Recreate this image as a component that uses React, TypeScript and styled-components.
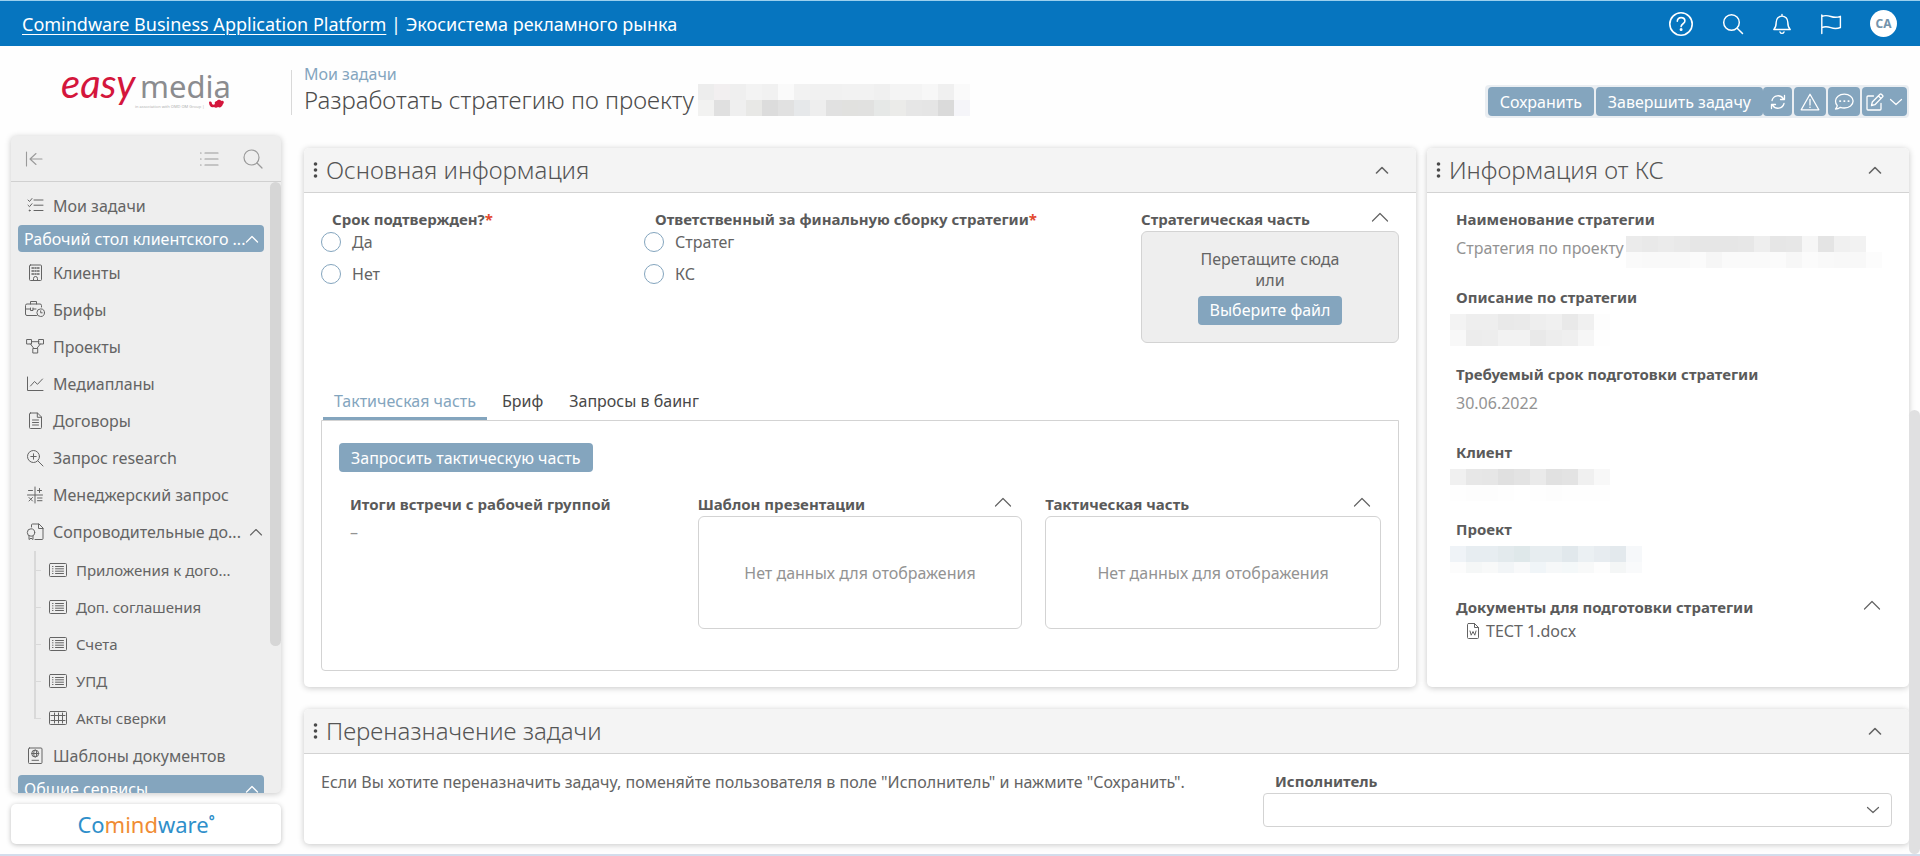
import React, { useId, useState } from "react";
import type { ReactNode } from "react";
import styled, { createGlobalStyle, css } from "styled-components";

const color = {
  brand: "#0675bf",
  accent: "#84a5be",
  text: "#646464",
  label: "#5a5a5a",
  muted: "#939393",
  line: "#d3d3d3",
  panelHead: "#f4f4f4",
  side: "#eeeeee",
};

const Global = createGlobalStyle`
  *, *::before, *::after { box-sizing: border-box; }
  body {
    margin: 0;
    background: #fefefe;
    color: ${color.text};
    font: 400 16px/22px "Noto Sans", "Open Sans", sans-serif;
  }
  button, input, select { font: inherit; color: inherit; }
  button { padding: 0; border: 0; background: none; cursor: pointer; }
  h1, h2, p, ul { margin: 0; padding: 0; }
  ul { list-style: none; }
  a { color: inherit; text-decoration: none; }
  svg { display: block; flex: none; }
`;

/* ---------- icons ---------- */

type IconProps = { w?: number; h?: number; sw?: number; children: ReactNode };

const Icon = ({ w = 20, h = 20, sw = 1, children }: IconProps) => (
  <svg
    width={w}
    height={h}
    viewBox={`0 0 ${w} ${h}`}
    fill="none"
    stroke="currentColor"
    strokeWidth={sw}
    strokeLinecap="round"
    strokeLinejoin="round"
    aria-hidden="true"
  >
    {children}
  </svg>
);

const ChevronUp = ({ wide = false, sw = 1.3 }: { wide?: boolean; sw?: number }) =>
  wide ? (
    <Icon w={18} h={10} sw={sw}><path d="M1.500 9 9 1.500 16.500 9" /></Icon>
  ) : (
    <Icon w={14} h={8} sw={sw}><path d="M1.500 7 7 1.500 12.500 7" /></Icon>
  );

const ChevronDown = () => (
  <Icon w={14} h={8} sw={1.2}><path d="M1.500 1.500 7 6.500l5.500-5" /></Icon>
);

const icons = {
  help: (
    <Icon w={26} h={26} sw={1.6}>
      <circle cx="13" cy="13" r="11.200" />
      <path d="M9.300 10.200c0-2.200 1.600-3.600 3.800-3.600s3.800 1.400 3.800 3.400c0 2.800-3.800 2.700-3.800 5.600" />
      <circle cx="13.100" cy="18.600" r=".7" fill="currentColor" />
    </Icon>
  ),
  searchTop: (
    <Icon w={22} h={22} sw={1.5}><circle cx="9.500" cy="9.500" r="7.800" /><path d="m15.200 15.200 5.300 5.300" /></Icon>
  ),
  bell: (
    <Icon w={20} h={22} sw={1.4}>
      <path d="M10 1.500v1.600M1.800 16.500c1.700-1.600 2.400-3 2.400-7.200C4.200 5.700 6.800 3.100 10 3.100s5.800 2.600 5.800 6.200c0 4.200.7 5.600 2.400 7.200z" />
      <path d="M8 19c.4 1 1.100 1.400 2 1.400s1.600-.4 2-1.400" />
    </Icon>
  ),
  flag: (
    <Icon w={22} h={22} sw={1.4}>
      <path d="M1.800 20.500V2M1.800 3.500c3.300-1.600 5.500-1.200 9 0s6.200 1.200 9.600-.2v11.200c-3.400 1.400-6.100 1.400-9.600.2s-5.700-1.600-9 0" />
    </Icon>
  ),
  collapse: (
    <Icon w={18} h={16} sw={1.1}><path d="M1.500 1v14M17 8H5M11 2.500 5 8l6 5.500" /></Icon>
  ),
  list: (
    <Icon w={20} h={16} sw={1.2}><path d="M6 2h13M6 8h13M6 14h13M1.500 2h.6M1.500 8h.6M1.500 14h.6" /></Icon>
  ),
  search: (
    <Icon w={20} h={20} sw={1.2}><circle cx="8.500" cy="8.500" r="7.500" /><path d="m14 14 5 5" /></Icon>
  ),
  tasks: (
    <Icon>
      <path d="M9 4h9M9 9.200h9M9 14.500h9M3 4l1.500 1.500L7 2.500M3 9.200l1.500 1.500L7 7.700" />
      <circle cx="4.600" cy="14.500" r=".5" fill="currentColor" />
    </Icon>
  ),
  building: (
    <Icon>
      <rect x="4.500" y="2" width="12" height="15.500" rx="1" />
      <path d="M7 5h1.500M10 5h1M12.500 5H14M7 8h1.500M10 8h1M12.500 8H14M7 11h1.500M10 11h1M12.500 11H14" strokeWidth="1.500" />
      <path d="M8.500 17.500v-2a2 2 0 0 1 4 0v2" />
    </Icon>
  ),
  briefcase: (
    <Icon>
      <path d="M11.500 15.500H2A1.500 1.500 0 0 1 .5 14V5.500A1.500 1.500 0 0 1 2 4h13a1.500 1.500 0 0 1 1.500 1.500V7M5.500 4V1.500h6V4M.5 9h5M8 9h3M5.500 8v2.500H8V8" />
      <circle cx="15.700" cy="12.700" r="3.800" />
      <path d="M15.700 10.800v2h1.500" />
    </Icon>
  ),
  nodes: (
    <Icon>
      <rect x="2" y="2.500" width="4.500" height="4.500" />
      <rect x="14" y="2.500" width="4.500" height="4.500" />
      <rect x="8.200" y="11.500" width="4.500" height="4.500" />
      <path d="M6.500 4.700H14M5.500 7l3.400 4.500M15.300 7l-3.500 4.500" />
    </Icon>
  ),
  chart: <Icon><path d="M2.500 3v13.500h15.500M5.500 12l4-4.500 3 2.800L17.500 5" /></Icon>,
  doc: (
    <Icon>
      <path d="M5.500 2h7l4 4v10.500a1 1 0 0 1-1 1h-10a1 1 0 0 1-1-1V3a1 1 0 0 1 1-1zM12.300 2v4.300h4.200M7.500 9h6M7.500 11.500h6M7.500 14h6" />
    </Icon>
  ),
  zoomIn: (
    <Icon><circle cx="8.500" cy="8.500" r="6" /><path d="m13 13 5 5M8.500 5.800v5.400M5.800 8.500h5.400" /></Icon>
  ),
  calc: (
    <Icon>
      <path d="M10 2v16M2.500 10h15M3.500 5.500h4M12.500 5.500h4M14.500 3.500v4M4 12.500l3.500 3.500M7.500 12.500 4 16M12.500 13h4.500M12.500 15.700h4.500" />
    </Icon>
  ),
  certificate: (
    <Icon>
      <path d="M6.500 5V3a1 1 0 0 1 1-1h6.500l4 4v10.500a1 1 0 0 1-1 1H10M13.500 2v4.500H18" />
      <circle cx="6" cy="10.500" r="3.700" />
      <path d="M4 13.700V17.500l2-1.300 2 1.300v-3.800" />
    </Icon>
  ),
  template: (
    <Icon>
      <rect x="3.500" y="2" width="13.500" height="15.500" rx="1" />
      <circle cx="10.200" cy="7.500" r="3.500" />
      <ellipse cx="10.200" cy="7.500" rx="1.500" ry="3.500" />
      <path d="M6.700 7.500h7M7 14.300h6.500" />
    </Icon>
  ),
  form: (
    <Icon w={18} h={14}>
      <rect x=".5" y=".5" width="17" height="13" rx="1" />
      <path d="M6.500 3.500h8M6.500 5.800h8M6.500 8.200h8M6.500 10.500h8M3.500 3.500h.5M3.500 5.800h.5M3.500 8.200h.5M3.500 10.500h.5" />
    </Icon>
  ),
  grid: (
    <Icon w={18} h={14}>
      <rect x=".5" y=".5" width="17" height="13" rx="1" />
      <path d="M2 4.500h14M2 9.500h14M5.500 2v10M9.500 2v10M13.500 2v10" />
    </Icon>
  ),
  refresh: (
    <Icon w={16} h={16} sw={1.3}>
      <path d="M2 6.500A6.200 6.200 0 0 1 13.300 4.700M14 9.500A6.200 6.200 0 0 1 2.700 11.300M14.500 1.500v4h-4M1.500 14.500v-4h4" />
    </Icon>
  ),
  warning: (
    <Icon w={20} h={18} sw={1.3}>
      <path d="M10 1.200 18.800 16.800H1.200zM10 6.500v5.500M10 14.100v.3" />
    </Icon>
  ),
  chat: (
    <Icon w={20} h={18} sw={1.3}>
      <path d="M10.300 1.200c5 0 8.800 3 8.800 6.900s-3.800 6.900-8.800 6.900c-1.400 0-2.800-.2-3.900-.7-1.300 1-3 1.700-4.900 1.700 1-.9 1.600-2 1.800-3.300C2.100 11.500 1.500 9.900 1.500 8.100c0-3.900 3.800-6.900 8.800-6.900z" />
      <path d="M6 8.100h.3M10.200 8.100h.3M14.400 8.100h.3" strokeWidth="1.900" />
    </Icon>
  ),
  edit: (
    <Icon w={18} h={18} sw={1.3}>
      <path d="M7.500 3H2A1 1 0 0 0 1 4v12a1 1 0 0 0 1 1h12a1 1 0 0 0 1-1v-5.500M5.500 12.500l.8-3.500L14 1.300a1 1 0 0 1 1.400 0l1.200 1.200a1 1 0 0 1 0 1.400L8.900 11.700zM12.500 3l2.500 2.500" />
    </Icon>
  ),
  word: (
    <Icon w={12} h={16}>
      <path d="M1.500.5h6l4 4v10a1 1 0 0 1-1 1h-9a1 1 0 0 1-1-1v-13a1 1 0 0 1 1-1zM7.500.5v4h4M3 8l1.200 4.200L6 8.500l1.800 3.700L9 8" />
    </Icon>
  ),
};

/* ---------- shell ---------- */

const Shell = styled.div`
  position: relative;
  display: flex;
  flex-direction: column;
  min-height: 100vh;
  border-bottom: 2px solid #d3ddec;
`;

const TopBar = styled.header`
  display: flex;
  align-items: center;
  justify-content: space-between;
  height: 46px;
  padding: 0 23px 0 22px;
  border-top: 1px solid #9bd0ee;
  background: ${color.brand};
  color: #fff;
  font-size: 18px;
`;

const PlatformLink = styled.a`
  text-decoration: underline;
  text-decoration-thickness: 1px;
  text-underline-offset: 3px;
`;

const TopActions = styled.div`
  display: flex;
  align-items: center;
  gap: 28px;
`;

const Avatar = styled.button`
  width: 27px;
  height: 27px;
  border-radius: 50%;
  background: #fff;
  color: #7393ab;
  font-size: 12px;
  font-weight: 700;
`;

const Body = styled.div`
  flex: 1;
  display: grid;
  grid-template-columns: 291px minmax(0, 1fr);
`;

/* ---------- sidebar ---------- */

const SideColumn = styled.div`
  display: flex;
  flex-direction: column;
  padding: 0 10px 10px 11px;
`;

const LogoArea = styled.div`
  display: flex;
  align-items: center;
  justify-content: center;
  height: 90px;
`;

const SidePanel = styled.nav`
  position: relative;
  flex: 1 1 0;
  display: flex;
  flex-direction: column;
  min-height: 0;
  overflow: hidden;
  border-radius: 5px;
  background: ${color.side};
  box-shadow: 0 1px 6px rgba(0, 0, 0, 0.22);
`;

const SideHead = styled.div`
  flex: none;
  display: flex;
  align-items: center;
  gap: 24px;
  height: 46px;
  padding: 0 18px 0 14px;
  border-bottom: 1px solid #d0d0d0;
  color: #9a9a9a;

  button:first-child { margin-right: auto; }
`;

const SideList = styled.ul`
  padding: 5px 17px 0 7px;
`;

const SideLink = styled.a`
  display: flex;
  align-items: center;
  gap: 8px;
  height: 37px;
  padding: 0 5px 0 7px;
  white-space: nowrap;

  svg:last-child:not(:first-child) { margin-left: auto; }
`;

const GroupButton = styled.button`
  display: flex;
  align-items: center;
  justify-content: space-between;
  width: 100%;
  height: 27px;
  margin: 1px 0 2px;
  padding: 0 5px 0 6px;
  border-radius: 4px;
  background: ${color.accent};
  color: #fff;
  white-space: nowrap;
`;

const SubItem = styled.li`
  position: relative;

  &::before, &::after {
    content: "";
    position: absolute;
    left: 16px;
    background: #d9d9d9;
  }
  &::before { top: 0; width: 2px; height: 100%; }
  &:last-child::before { height: 50%; }
  &::after { top: 50%; width: 7px; height: 1px; }
`;

const SubList = styled.ul`
  padding: 1px 0;
`;

const SubLink = styled.a`
  display: flex;
  align-items: center;
  gap: 9px;
  height: 37px;
  padding-left: 31px;
  font-size: 15px;
  white-space: nowrap;
`;

const SideThumb = styled.span`
  position: absolute;
  top: 46px;
  right: 0;
  width: 11px;
  height: calc((100% - 46px) * 0.76);
  border-radius: 6px;
  background: #d6d6d6;
`;

const VendorCard = styled.a`
  display: flex;
  align-items: center;
  justify-content: center;
  height: 40px;
  margin-top: 11px;
  border-radius: 5px;
  background: #fff;
  box-shadow: 0 1px 5px rgba(0, 0, 0, 0.25);
  color: #2f8fca;
  font-size: 22px;

  span { color: #f08c34; }
  sup { align-self: flex-start; margin-top: 10px; font-size: 14px; line-height: 14px; font-weight: 700; }
`;

type NavEntry = { label: string; icon: keyof typeof icons };

const clientLinks: NavEntry[] = [
  { label: "Клиенты", icon: "building" },
  { label: "Брифы", icon: "briefcase" },
  { label: "Проекты", icon: "nodes" },
  { label: "Медиапланы", icon: "chart" },
  { label: "Договоры", icon: "doc" },
  { label: "Запрос research", icon: "zoomIn" },
  { label: "Менеджерский запрос", icon: "calc" },
];

const docLinks: NavEntry[] = [
  { label: "Приложения к дого...", icon: "form" },
  { label: "Доп. соглашения", icon: "form" },
  { label: "Счета", icon: "form" },
  { label: "УПД", icon: "form" },
  { label: "Акты сверки", icon: "grid" },
];

const NavItem = ({ label, icon, open }: NavEntry & { open?: boolean }) => (
  <SideLink href="#">
    {icons[icon]}
    {label}
    {open && <ChevronUp sw={1.1} />}
  </SideLink>
);

const Logo = () => (
  <svg width="176" height="72" viewBox="0 0 176 72" role="img" aria-label="easymedia">
    <text x="3" y="43" fontFamily="Lato, sans-serif" fontStyle="italic" fontWeight="400" fontSize="40" fill="#d4163c">easy</text>
    <text x="82" y="43" fontFamily="Noto Sans, sans-serif" fontWeight="400" fontSize="31" fill="#8b8c8f">media</text>
    <text x="77" y="53" fontFamily="Noto Sans, sans-serif" fontSize="4" fill="#b0b0b0">in association with OMD OM Group |</text>
    <path d="M151 47c2-1 3 0 3 2 1 1 2 1 3 0-1-2 1-3 2-3 1-2 4-1 4 0 2-1 4 1 2 3-1 3-3 4-5 3-1 1-3 1-4 0-3 1-5-1-5-5z" fill="#d4163c" />
  </svg>
);

const Sidebar = () => (
  <SideColumn>
    <LogoArea><Logo /></LogoArea>
    <SidePanel aria-label="Навигация">
      <SideHead>
        <button type="button" aria-label="Свернуть">{icons.collapse}</button>
        <button type="button" aria-label="Список">{icons.list}</button>
        <button type="button" aria-label="Поиск">{icons.search}</button>
      </SideHead>
      <SideList>
        <li><NavItem label="Мои задачи" icon="tasks" /></li>
        <li>
          <GroupButton type="button">Рабочий стол клиентского ...<ChevronUp /></GroupButton>
          <ul>
            {clientLinks.map((l) => <li key={l.label}><NavItem {...l} /></li>)}
            <li>
              <NavItem label="Сопроводительные до..." icon="certificate" open />
              <SubList>
                {docLinks.map((l) => (
                  <SubItem key={l.label}>
                    <SubLink href="#">{icons[l.icon]}{l.label}</SubLink>
                  </SubItem>
                ))}
              </SubList>
            </li>
            <li><NavItem label="Шаблоны документов" icon="template" /></li>
          </ul>
        </li>
        <li><GroupButton type="button">Общие сервисы<ChevronUp /></GroupButton></li>
      </SideList>
      <SideThumb />
    </SidePanel>
    <VendorCard href="#">Co<span>mind</span>ware<sup>°</sup></VendorCard>
  </SideColumn>
);

/* ---------- main area ---------- */

const Main = styled.main`
  padding: 0 11px 10px 0;
`;

const PageHead = styled.div`
  display: flex;
  height: 102px;
  padding-top: 18px;
`;

const Divider = styled.span`
  width: 1px;
  height: 45px;
  margin: 6px 12px 0 0;
  background: #d9d9d9;
`;

const Breadcrumb = styled.a`
  display: block;
  line-height: 21px;
  color: ${color.accent};
`;

const PageTitle = styled.h1`
  display: flex;
  align-items: center;
  gap: 4px;
  height: 30px;
  font-size: 24px;
  font-weight: 300;
  line-height: 30px;
  color: #4c4c4c;
`;

const Toolbar = styled.div`
  display: flex;
  gap: 2px;
  height: 33px;
  margin: 21px 0 0 auto;
  padding: 2px 2px 2px 3px;
  border-radius: 4px;
  background: #eaeef2;
`;

const actionStyle = css`
  display: inline-flex;
  align-items: center;
  justify-content: center;
  gap: 5px;
  border-radius: 4px;
  background: ${color.accent};
  color: #fff;
  white-space: nowrap;
`;

const ActionButton = styled.button`
  ${actionStyle}
  height: 29px;
  padding: 0 12px;
`;

const IconAction = styled.button<{ $width?: number; $joined?: boolean }>`
  ${actionStyle}
  width: ${(p) => p.$width ?? 32}px;
  margin-left: ${(p) => (p.$joined ? "-2px" : 0)};
`;

const Panels = styled.div`
  display: grid;
  grid-template-columns: minmax(0, 1112fr) minmax(0, 482fr);
  gap: 22px 11px;
  padding-left: 13px;
`;

const PanelBox = styled.section<{ $wide?: boolean }>`
  display: flex;
  flex-direction: column;
  grid-column: ${(p) => (p.$wide ? "1 / -1" : "auto")};
  border-radius: 5px;
  background: #fff;
  box-shadow: 0 1px 6px rgba(0, 0, 0, 0.22);
`;

const PanelHead = styled.header`
  display: flex;
  align-items: center;
  height: 45px;
  padding: 0 27px 0 9px;
  border-bottom: 1px solid ${color.line};
  border-radius: 5px 5px 0 0;
  background: ${color.panelHead};
`;

const PanelTitle = styled.h2`
  margin: 0 auto 0 8px;
  font-size: 24px;
  font-weight: 300;
  line-height: 30px;
  color: #555;
`;

const Grip = () => (
  <svg width="5" height="16" viewBox="0 0 5 16" fill="#4a4a4a" aria-hidden="true">
    <circle cx="2.500" cy="2" r="1.800" /><circle cx="2.500" cy="8" r="1.800" /><circle cx="2.500" cy="14" r="1.800" />
  </svg>
);

const Panel = ({ title, wide, children }: { title: string; wide?: boolean; children: ReactNode }) => (
  <PanelBox $wide={wide}>
    <PanelHead>
      <Grip />
      <PanelTitle>{title}</PanelTitle>
      <button type="button" aria-label={`Свернуть: ${title}`}><ChevronUp sw={1.6} /></button>
    </PanelHead>
    {children}
  </PanelBox>
);

/* Redacted value drawn as rows of shaded cells. */
const MosaicGrid = styled.span<{ $cols: number; $pull?: boolean; $tail?: number }>`
  display: inline-grid;
  grid-template-columns: repeat(${(p) => p.$cols}, 16px);
  grid-template-rows: 16px ${(p) => p.$tail ?? 16}px;
  margin-left: ${(p) => (p.$pull ? "-6px" : 0)};
`;

const Cell = styled.i<{ $fill: string }>`
  background: #${(p) => p.$fill};
`;

const Mosaic = ({ rows, pull, tail }: { rows: [string, string]; pull?: boolean; tail?: number }) => {
  const cells = rows.map((r) => r.split(" ").map((c) => (c.length === 2 ? c + c + c : c)));
  return (
    <MosaicGrid $cols={cells[0].length} $pull={pull} $tail={tail} aria-hidden="true">
      {cells.flat().map((c, i) => <Cell key={i} $fill={c} />)}
    </MosaicGrid>
  );
};

const labelStyle = css`
  display: block;
  height: 22px;
  margin: 0;
  color: ${color.label};
  font-size: 15px;
  font-weight: 700;
  line-height: 20px;
  white-space: nowrap;
`;

const Label = styled.span<{ $inset?: number }>`
  ${labelStyle}
  padding-left: ${(p) => p.$inset ?? 0}px;
`;

const SelectLabel = styled.label`
  ${labelStyle}
  padding-left: 12px;
`;

const Required = styled.span`
  color: #e2492f;
`;

const MainBody = styled.div`
  padding: 16px 17px;
`;

const TopFields = styled.div`
  display: grid;
  grid-template-columns: minmax(0, 323fr) minmax(0, 497fr) minmax(0, 258fr);
  min-height: 176px;
`;

const RadioSet = styled.fieldset`
  margin: 0;
  padding: 0;
  border: 0;
  min-width: 0;
`;

const Legend = styled.legend`
  ${labelStyle}
  padding: 0 0 0 11px;
`;

const RadioRow = styled.label`
  display: flex;
  align-items: center;
  gap: 11px;
  height: 20px;
  margin: 1px 0 12px;
`;

const Radio = styled.input`
  appearance: none;
  width: 20px;
  height: 20px;
  margin: 0;
  border: 1px solid ${color.accent};
  border-radius: 50%;
  background: #fff;

  &:checked { border-width: 6px; }
`;

const RadioField = ({ title, options }: { title: string; options: string[] }) => {
  const name = useId();
  return (
    <RadioSet>
      <Legend>{title}<Required>*</Required></Legend>
      {options.map((o) => (
        <RadioRow key={o}><Radio type="radio" name={name} />{o}</RadioRow>
      ))}
    </RadioSet>
  );
};

const FieldHead = styled.div`
  display: flex;
  justify-content: space-between;
  align-items: flex-start;
  padding-right: 10px;

  button { margin-top: 3px; }
`;

const DropZone = styled.div`
  display: flex;
  flex-direction: column;
  align-items: center;
  height: 112px;
  padding-top: 17px;
  border: 1px solid ${color.line};
  border-radius: 6px;
  background: ${color.side};
  line-height: 21px;
  text-align: center;

  button { margin-top: 5px; }
`;

const TabList = styled.div`
  display: flex;
  gap: 4px;
  padding-left: 2px;
`;

const Tab = styled.button`
  height: 35px;
  padding: 0 11px;
  border-bottom: 3px solid transparent;
  color: #484848;

  &[aria-selected="true"] {
    border-color: ${color.accent};
    color: ${color.accent};
  }
`;

const TabPanel = styled.div`
  padding: 22px 17px 41px;
  border: 1px solid ${color.line};
  border-radius: 0 0 4px 4px;
`;

const ResultGrid = styled.div`
  display: grid;
  grid-template-columns: minmax(0, 336fr) minmax(0, 325fr) minmax(0, 336fr);
  gap: 23px;
  margin-top: 22px;
`;

const Dash = styled.p`
  padding: 5px 0 0 11px;
  color: ${color.muted};
`;

const EmptyBox = styled.div`
  display: flex;
  align-items: center;
  justify-content: center;
  height: 113px;
  border: 1px solid ${color.line};
  border-radius: 6px;
  color: ${color.muted};
`;

const Collapser = ({ title }: { title: string }) => (
  <FieldHead>
    <Label>{title}</Label>
    <button type="button" aria-label={`Свернуть: ${title}`}><ChevronUp wide sw={1.2} /></button>
  </FieldHead>
);

const InfoBody = styled.div`
  flex: 1;
  display: grid;
  grid-template-rows: repeat(6, 1fr);
  padding: 16px 18px 13px 29px;
`;

const InfoValue = styled.div`
  display: flex;
  align-items: flex-start;
  height: 32px;
  margin-top: 5px;
  color: ${color.muted};
  line-height: 24px;
  white-space: nowrap;
  gap: 2px;
`;

const FileLink = styled.a`
  display: flex;
  align-items: center;
  gap: 7px;
  padding: 1px 0 0 11px;
`;

const AssignBody = styled.div`
  display: grid;
  grid-template-columns: minmax(0, 942fr) minmax(0, 629fr);
  padding: 17px;
`;

const SelectWrap = styled.div`
  position: relative;

  svg {
    position: absolute;
    top: 13px;
    right: 12px;
    pointer-events: none;
  }
`;

const Select = styled.select`
  appearance: none;
  display: block;
  width: 100%;
  height: 34px;
  padding: 0 36px 0 12px;
  border: 1px solid ${color.line};
  border-radius: 4px;
  background: #fff;
`;

const PageThumb = styled.span`
  position: absolute;
  right: 0;
  bottom: 0;
  width: 11px;
  height: 52%;
  border-radius: 6px;
  background: #e0e0e1;
`;

const tabs = ["Тактическая часть", "Бриф", "Запросы в баинг"];

const MainInfo = () => {
  const [active, setActive] = useState(0);
  return (
    <Panel title="Основная информация">
      <MainBody>
        <TopFields>
          <RadioField title="Срок подтвержден?" options={["Да", "Нет"]} />
          <RadioField title="Ответственный за финальную сборку стратегии" options={["Стратег", "КС"]} />
          <div>
            <Collapser title="Стратегическая часть" />
            <DropZone>
              Перетащите сюда<br />или
              <ActionButton type="button">Выберите файл</ActionButton>
            </DropZone>
          </div>
        </TopFields>
        <TabList role="tablist">
          {tabs.map((t, i) => (
            <Tab key={t} type="button" role="tab" aria-selected={i === active} onClick={() => setActive(i)}>{t}</Tab>
          ))}
        </TabList>
        <TabPanel role="tabpanel">
          <ActionButton type="button">Запросить тактическую часть</ActionButton>
          <ResultGrid>
            <div>
              <Label $inset={11}>Итоги встречи с рабочей группой</Label>
              <Dash>–</Dash>
            </div>
            {["Шаблон презентации", "Тактическая часть"].map((t) => (
              <div key={t}>
                <Collapser title={t} />
                <EmptyBox>Нет данных для отображения</EmptyBox>
              </div>
            ))}
          </ResultGrid>
        </TabPanel>
      </MainBody>
    </Panel>
  );
};

const ClientInfo = () => (
  <Panel title="Информация от КС">
    <InfoBody>
      <div>
        <Label>Наименование стратегии</Label>
        <InfoValue>
          Стратегия по проекту
          <Mosaic rows={["eb e9 eb e9 e6 e6 e6 e7 ee e6 e7 f6 e4 f0 f2 ff", "fa f9 f9 f9 fb f6 fa fa fa fb f7 fb f9 f8 f8 fc"]} />
        </InfoValue>
      </div>
      <div>
        <Label>Описание по стратегии</Label>
        <InfoValue><Mosaic pull rows={["f3 ee ee e9 ea ee f0 e9 f0 fd", "f8 ec ed f2 f2 e9 ed ef f6 fe"]} /></InfoValue>
      </div>
      <div>
        <Label>Требуемый срок подготовки стратегии</Label>
        <InfoValue>30.06.2022</InfoValue>
      </div>
      <div>
        <Label>Клиент</Label>
        <InfoValue><Mosaic pull rows={["f0 e7 e6 e0 e3 ea e1 e3 f0 f8", "fe fd fd fe ff fe fd fe fe fe"]} /></InfoValue>
      </div>
      <div>
        <Label>Проект</Label>
        <InfoValue>
          <Mosaic
            pull
            tail={11}
            rows={[
              "eff3f7 e7edf1 e7edf1 e3eaed dfe8ea e7edf0 e7edf0 e1e8ec ebf0f3 e7ecf0 e3e9ed f6f8fa",
              "fc f5f7f7 f8f9f9 f2f5f7 f8f9fa f0f5f8 f6f8f9 f4f8f9 f8f9f9 fd f4f6f6 f9fafb",
            ]}
          />
        </InfoValue>
      </div>
      <div>
        <Collapser title="Документы для подготовки стратегии" />
        <FileLink href="#">{icons.word}ТЕСТ 1.docx</FileLink>
      </div>
    </InfoBody>
  </Panel>
);

const Reassign = () => {
  const id = useId();
  return (
    <Panel title="Переназначение задачи" wide>
      <AssignBody>
        <p>Если Вы хотите переназначить задачу, поменяйте пользователя в поле "Исполнитель" и нажмите "Сохранить".</p>
        <div>
          <SelectLabel htmlFor={id}>Исполнитель</SelectLabel>
          <SelectWrap>
            <Select id={id} defaultValue=""><option value="" /></Select>
            <ChevronDown />
          </SelectWrap>
        </div>
      </AssignBody>
    </Panel>
  );
};

export default function App() {
  return (
    <>
      <Global />
      <Shell>
        <TopBar>
          <div><PlatformLink href="#">Comindware Business Application Platform</PlatformLink> | Экосистема рекламного рынка</div>
          <TopActions>
            <button type="button" aria-label="Справка">{icons.help}</button>
            <button type="button" aria-label="Поиск">{icons.searchTop}</button>
            <button type="button" aria-label="Уведомления">{icons.bell}</button>
            <button type="button" aria-label="Флаг">{icons.flag}</button>
            <Avatar type="button">CA</Avatar>
          </TopActions>
        </TopBar>
        <Body>
          <Sidebar />
          <Main>
            <PageHead>
              <Divider />
              <div>
                <Breadcrumb href="#">Мои задачи</Breadcrumb>
                <PageTitle>
                  Разработать стратегию по проекту
                  <Mosaic
                    rows={[
                      "ed f2eff0 ef f3 f1 fa f2 f1 f1 f2 f2 f0 f4 f4 f7 f0 fa",
                      "f2f2f1 e0 ef e8e8e6 dc e1 e6e8ea ee e1 e1e1df e1e1e0 e6e8e7 ebebe9 e6 e5 da f5f5f9",
                    ]}
                  />
                </PageTitle>
              </div>
              <Toolbar>
                <ActionButton type="button">Сохранить</ActionButton>
                <ActionButton type="button">Завершить задачу</ActionButton>
                <IconAction type="button" $width={29} $joined aria-label="Обновить">{icons.refresh}</IconAction>
                <IconAction type="button" aria-label="Предупреждения">{icons.warning}</IconAction>
                <IconAction type="button" aria-label="Комментарии">{icons.chat}</IconAction>
                <IconAction type="button" $width={45} aria-label="Изменить">{icons.edit}<ChevronDown /></IconAction>
              </Toolbar>
            </PageHead>
            <Panels>
              <MainInfo />
              <ClientInfo />
              <Reassign />
            </Panels>
          </Main>
        </Body>
        <PageThumb />
      </Shell>
    </>
  );
}
